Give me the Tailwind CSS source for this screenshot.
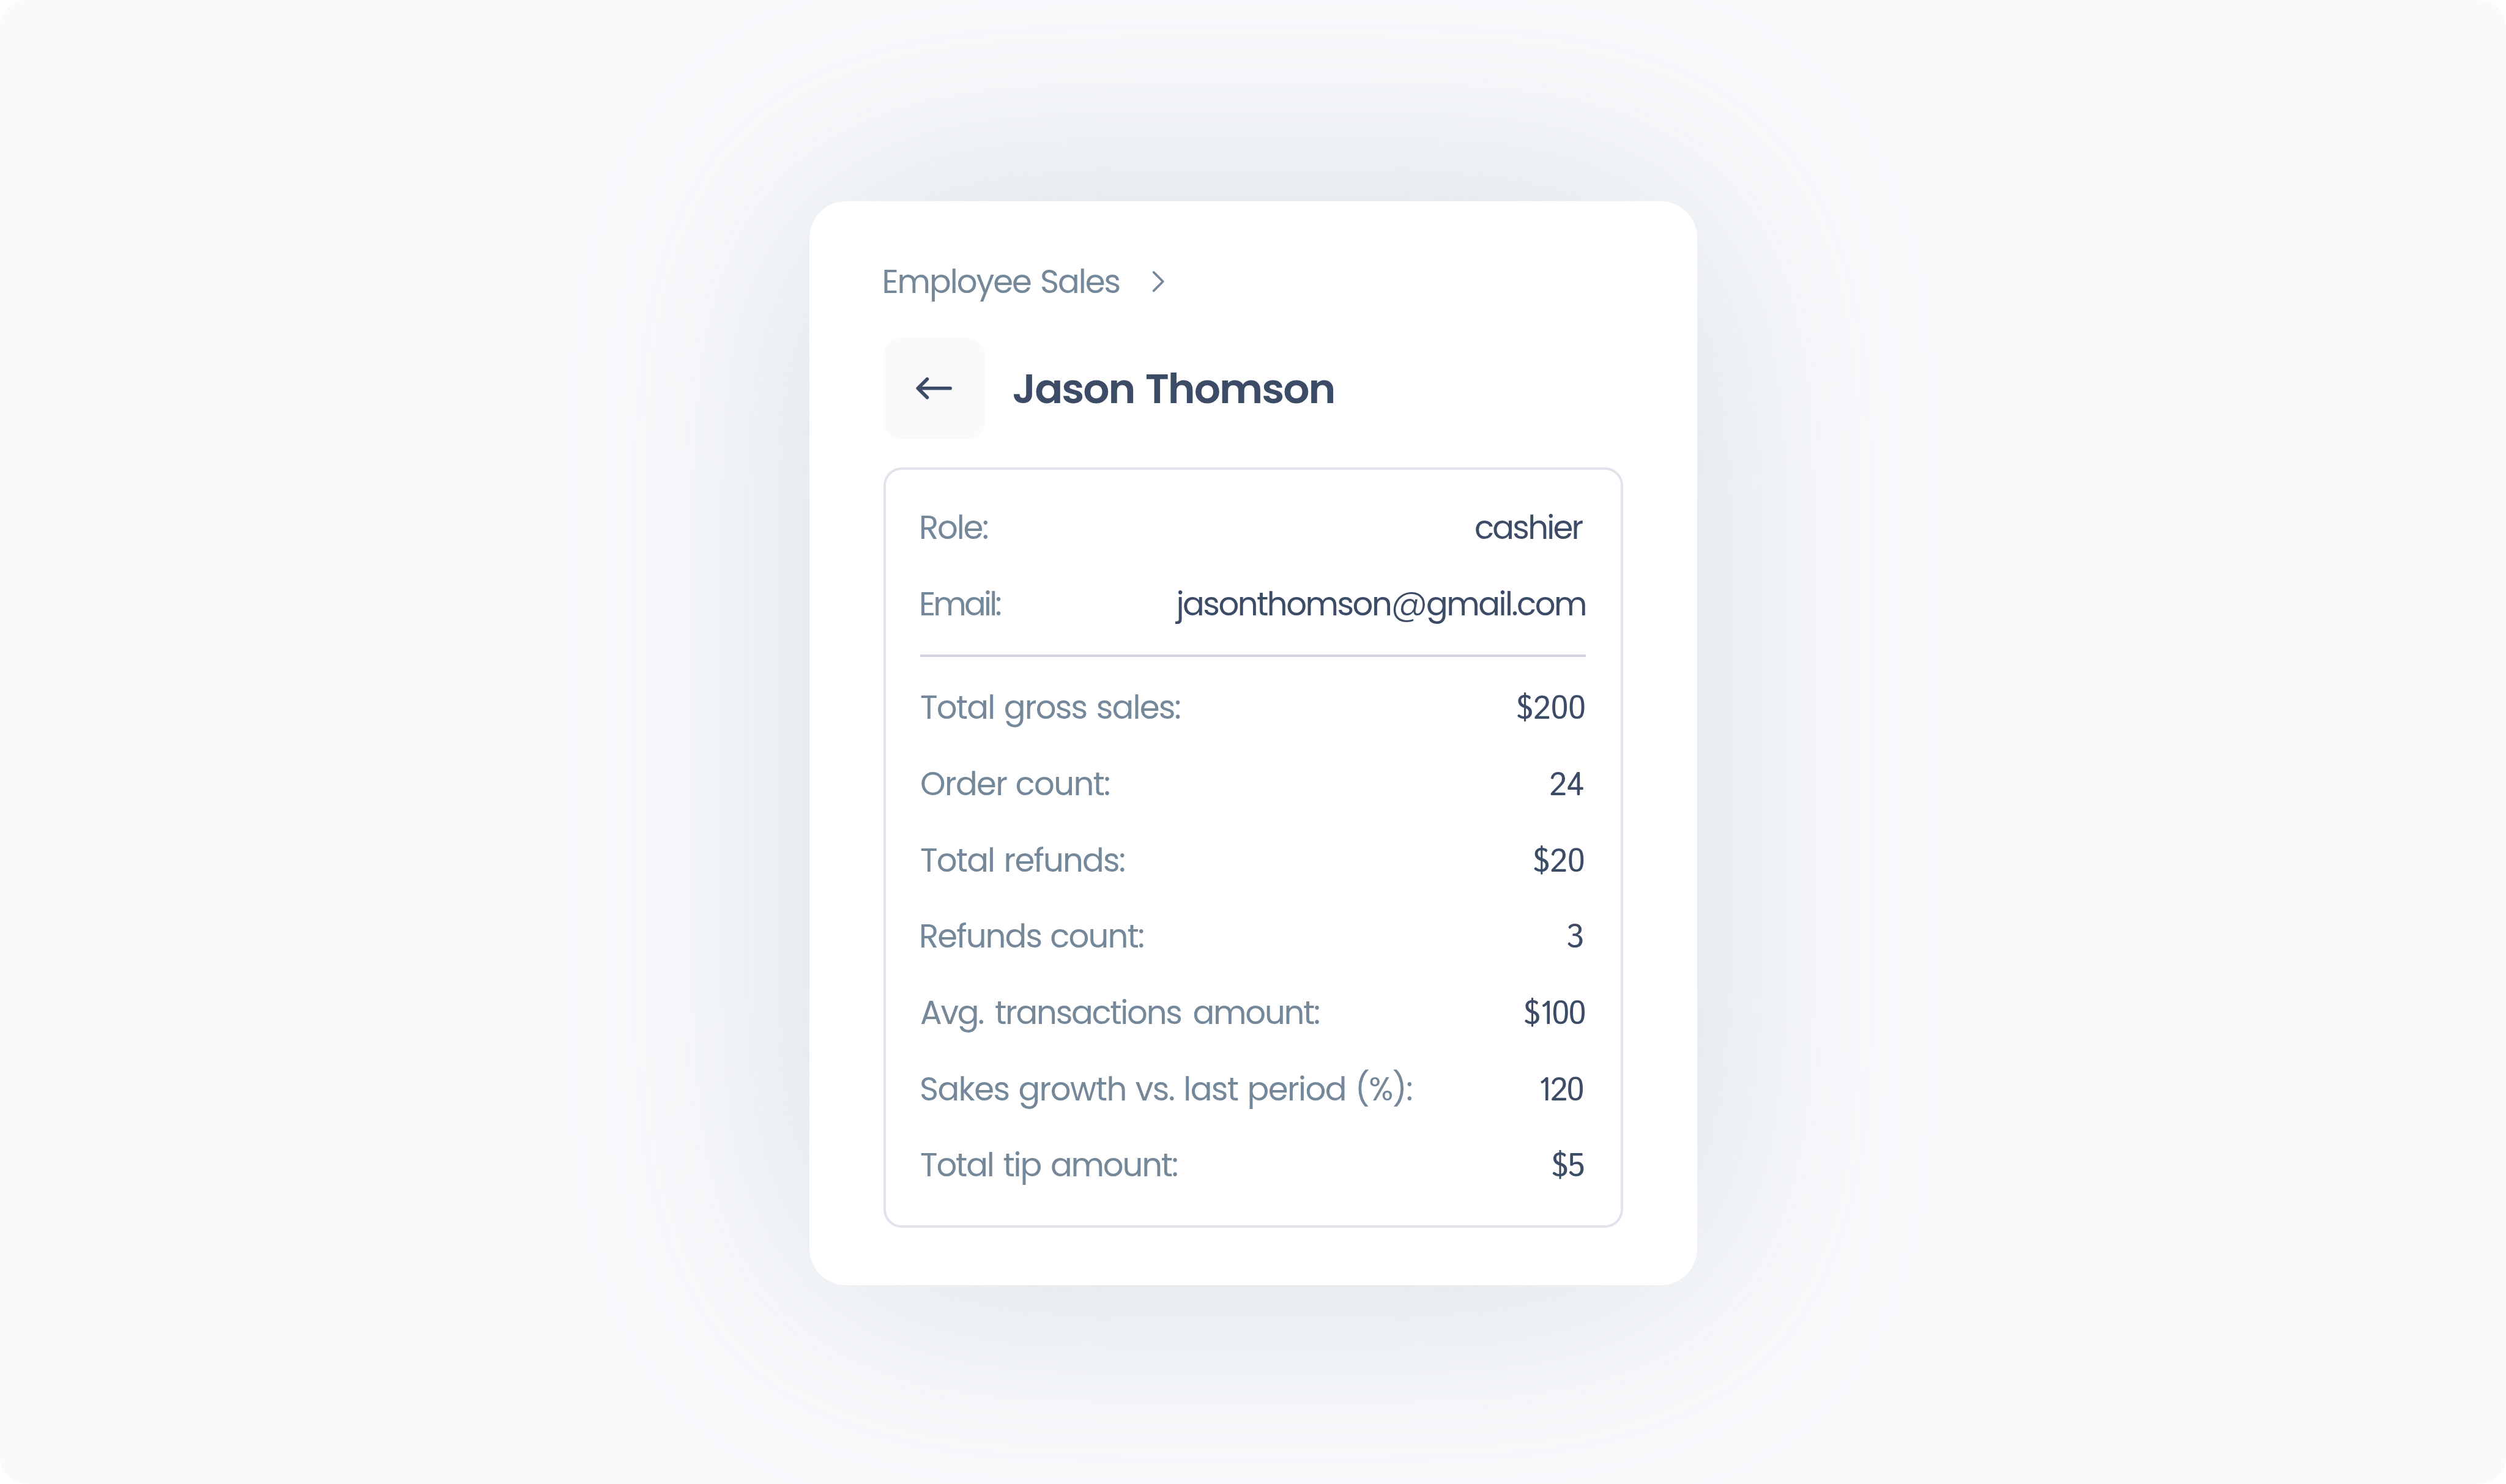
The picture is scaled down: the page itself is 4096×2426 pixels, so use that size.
<!DOCTYPE html>
<html lang="en">
<head>
    <meta charset="UTF-8">
    <meta name="viewport" content="width=device-width, initial-scale=1.0">
    <title>Employee Sales - Jason Thomson</title>
    <script src="https://cdn.jsdelivr.net/npm/@tailwindcss/browser@4"></script>
</head>
<body class="bg-white font-[Poppins,Inter,sans-serif]">
    <main class="w-[4096px] h-[2426px] bg-[#f9fafc] rounded-[45px] overflow-hidden flex flex-col items-center pt-[328.7px]">
        <div class="relative w-[1451px] h-[1772px] shrink-0">
            <!-- Soft glow behind the card -->
            <div class="absolute inset-0 rounded-[60px] bg-[#748c9c] opacity-25 blur-[210px]"></div>

            <div class="relative h-full bg-white rounded-[60px] px-[121px] pt-[91.5px]">
                <!-- Breadcrumb -->
                <nav class="h-[80px] flex items-center text-[52.9px] text-[#748899]">
                    <span class="-ml-[2px] tracking-[-2.03px] [word-spacing:3px]">Employee Sales</span>
                    <svg class="w-[60.5px] h-[60.5px] ml-[33px] mt-px" viewBox="0 0 16 16" fill="none" stroke="currentColor" stroke-linecap="round" stroke-linejoin="round"><path d="M6 4l4 4-4 4"/></svg>
                </nav>

                <header class="mt-[51.5px] flex items-center gap-[45px]">
                    <button class="w-[166px] h-[166px] rounded-[30px] bg-[#fafafc] flex items-center justify-center text-[#3d4c66]">
                        <svg class="w-[75.5px] h-[75.5px]" viewBox="0 0 20 20" fill="none" stroke="currentColor" stroke-width="1.5" stroke-linecap="round" stroke-linejoin="round"><path d="M17 10H3M7 6l-4 4 4 4"/></svg>
                    </button>
                    <h1 class="pt-[2px] text-[68px] font-semibold tracking-[-2.05px] [word-spacing:3px] text-[#3d4c66]">Jason Thomson</h1>
                </header>

                <!-- Details -->
                <section class="mt-[46px] h-[1243px] border-4 border-[#e4e0ec] rounded-[30px] px-[56.5px] pt-[33.5px] text-[52.9px] leading-[124.7px] text-[#748899]">
                    <div class="flex justify-between items-baseline">
                        <span class="-ml-[2px] tracking-[-2.15px]">Role:</span>
                        <span class="mr-[6.7px] tracking-[-2.8px] text-[#3d4c66]">cashier</span>
                    </div>
                    <div class="flex justify-between items-baseline">
                        <span class="-ml-[2px] tracking-[-3.8px]">Email:</span>
                        <span class="tracking-[-2.5px] text-[#3d4c66]">jasonthomson<span class="text-[60px] leading-none font-light">@</span>gmail.com</span>
                    </div>

                    <hr class="mt-[19.3px] mb-[21.3px] border-t-4 border-[#d8d0e0]">

                    <div class="flex justify-between items-baseline">
                        <span class="tracking-[-1.8px] [word-spacing:3px]">Total gross sales:</span>
                        <span class="font-['Istok_Web',sans-serif] leading-none text-[#3d4c66]">$200</span>
                    </div>
                    <div class="flex justify-between items-baseline">
                        <span class="tracking-[-1.68px] [word-spacing:2px]">Order count:</span>
                        <span class="mr-[2.5px] font-['Istok_Web',sans-serif] leading-none text-[#3d4c66]">24</span>
                    </div>
                    <div class="flex justify-between items-baseline">
                        <span class="tracking-[-1.84px] [word-spacing:3px]">Total refunds:</span>
                        <span class="mr-[1.4px] font-['Istok_Web',sans-serif] leading-none text-[#3d4c66]">$20</span>
                    </div>
                    <div class="flex justify-between items-baseline">
                        <span class="-ml-[2px] tracking-[-1.9px] [word-spacing:2px]">Refunds count:</span>
                        <span class="mr-[3.5px] font-['Istok_Web',sans-serif] leading-none text-[#3d4c66]">3</span>
                    </div>
                    <div class="flex justify-between items-baseline">
                        <span class="tracking-[-2.25px] [word-spacing:7px]">Avg. transactions amount:</span>
                        <span class="mr-px tracking-[-1.4px] font-['Istok_Web',sans-serif] leading-none text-[#3d4c66]">$100</span>
                    </div>
                    <div class="flex justify-between items-baseline">
                        <span class="-ml-px tracking-[-1.6px] [word-spacing:2.5px]">Sakes growth vs. last period (%):</span>
                        <span class="mr-[4.4px] tracking-[-1.7px] font-['Istok_Web',sans-serif] leading-none text-[#3d4c66]">120</span>
                    </div>
                    <div class="flex justify-between items-baseline">
                        <span class="tracking-[-2.18px] [word-spacing:4px]">Total tip amount:</span>
                        <span class="mr-[3px] tracking-[-1.5px] font-['Istok_Web',sans-serif] leading-none text-[#3d4c66]">$5</span>
                    </div>
                </section>
            </div>
        </div>
    </main>
</body>
</html>
